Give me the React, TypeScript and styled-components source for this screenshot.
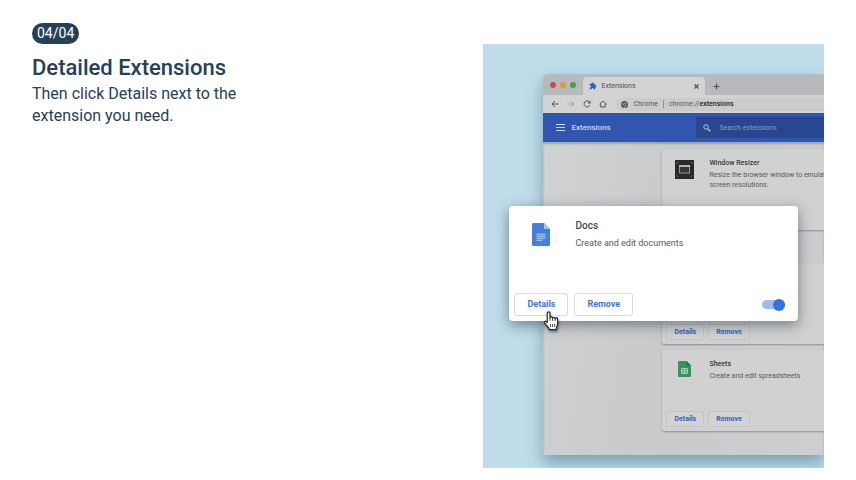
import React from "react";
import styled, { createGlobalStyle } from "styled-components";

const GlobalStyle = createGlobalStyle`
  *, *::before, *::after { box-sizing: border-box; }
  body {
    margin: 0;
    background: #fff;
    color: #284056;
    font-family: Roboto, "Liberation Sans", sans-serif;
  }
  h1, h2, h3, p { margin: 0; }
  button, input { font-family: inherit; }
  svg { display: block; }
`;

const Page = styled.main`
  display: grid;
  grid-template-columns: minmax(0, 1fr) minmax(0, 43%);
  padding: 23px 32px 12px;
`;

const Intro = styled.section`
  max-width: 224px;
`;

const StepBadge = styled.span`
  display: inline-block;
  padding: 0 5px;
  border-radius: 11px;
  background: #264057;
  color: #fff;
  font-size: 14px;
  line-height: 21px;
`;

const Title = styled.h1`
  margin-top: 9px;
  font-size: 22px;
  font-weight: 500;
  line-height: 30px;
  white-space: nowrap;
`;

const Lead = styled.p`
  font-size: 16px;
  line-height: 22px;
`;

const Illustration = styled.section`
  position: relative;
  overflow: hidden;
  margin-top: 21px;
  padding: 30px 0 13px 60px;
  background: #bfddea;
`;

const BrowserWindow = styled.div`
  border-radius: 5px 0 0 3px;
  background: #cbccce;
  box-shadow: 0 8px 16px rgba(60, 100, 125, 0.5);
`;

const TabStrip = styled.div`
  display: flex;
  align-items: flex-end;
  height: 21px;
  border-radius: 5px 0 0 0;
  background: #b7b9bd;
`;

const WindowDots = styled.div`
  display: flex;
  align-items: center;
  gap: 4px;
  width: 40px;
  height: 21px;
  padding-left: 7px;
`;

const Dot = styled.span<{ $color: string }>`
  width: 6px;
  height: 6px;
  border-radius: 50%;
  background: ${(p) => p.$color};
`;

const Tab = styled.div`
  display: flex;
  align-items: center;
  gap: 4px;
  width: 122px;
  height: 18px;
  padding: 0 5px 0 6px;
  border-radius: 4px 4px 0 0;
  background: #d3d3d4;
  color: #4b4d50;
  font-size: 7px;
`;

const TabLabel = styled.span`
  flex: 1;
`;

const IconButton = styled.button`
  display: flex;
  align-items: center;
  justify-content: center;
  width: 8px;
  height: 8px;
  padding: 0;
  border: 0;
  background: none;
  color: #505256;
`;

const NewTab = styled(IconButton)`
  margin: 0 0 5px 7px;
`;

const MenuButton = styled(IconButton)`
  width: 9px;
  color: #cfd8ea;
`;

const Toolbar = styled.div`
  display: flex;
  align-items: center;
  gap: 8px;
  height: 18px;
  padding-left: 8px;
  background: #d3d3d4;
`;

const AddressBar = styled.div`
  display: flex;
  flex: 1;
  align-items: center;
  gap: 5px;
  height: 13px;
  padding-left: 6px;
  border-radius: 7px 0 0 7px;
  background: #cacbcc;
  color: #56585b;
  font-size: 7px;
  white-space: nowrap;
`;

const AddressDivider = styled.span`
  width: 1px;
  height: 8px;
  background: #8e9093;
`;

const AddressPath = styled.span`
  color: #242629;
  font-weight: 500;
`;

const AppHeader = styled.header`
  display: flex;
  align-items: center;
  height: 29px;
  padding-left: 13px;
  background: #3156b0;
  color: #cfd8ea;
`;

const HeaderTitle = styled.h2`
  width: 125px;
  margin-left: 6px;
  font-size: 8px;
  font-weight: 500;
`;

const SearchBox = styled.label`
  display: flex;
  flex: 1;
  align-items: center;
  gap: 8px;
  min-width: 0;
  height: 21px;
  padding-left: 7px;
  background: #29478f;
`;

const SearchInput = styled.input`
  flex: 1;
  min-width: 0;
  padding: 0;
  border: 0;
  background: none;
  color: #cfd8ea;
  font-size: 7px;
  &::placeholder { color: #8b9dc6; opacity: 1; }
`;

const Content = styled.div`
  padding: 7px 0 24px 119px;
  background: linear-gradient(100deg, #cfd1d3, #c9cacc 45%, #cdced0);
  box-shadow: inset 0 2px 2px rgba(60, 65, 75, 0.3);
`;

const CardList = styled.div`
  display: grid;
  gap: 6px;
  margin-top: 33px;
`;

const Card = styled.article`
  display: flex;
  flex-direction: column;
  overflow: hidden;
  height: 81px;
  padding: 7px 0 4px 4px;
  border-radius: 2px 0 0 2px;
  background: #d1d1d1;
  box-shadow: 0 1px 2px rgba(50, 52, 56, 0.4);
`;

const CardBody = styled.div`
  display: grid;
  grid-template-columns: 37px 1fr;
  column-gap: 6px;
`;

const CardIcon = styled.div`
  display: flex;
  justify-content: center;
  padding-top: 4px;
`;

const CardTitle = styled.h3`
  color: #36383b;
  font-size: 7px;
  font-weight: 500;
  line-height: 14px;
`;

const CardText = styled.p`
  color: #56585b;
  font-size: 7px;
  line-height: 10px;
  white-space: nowrap;
`;

const CardActions = styled.div`
  display: flex;
  gap: 4px;
  margin-top: auto;
`;

const CardButton = styled.button`
  height: 16px;
  padding: 0 7px;
  border: 1px solid #c2c4c7;
  border-radius: 2px;
  background: #d3d3d4;
  color: #3462b4;
  font-size: 7px;
  font-weight: 700;
  line-height: 14px;
`;

const Spotlight = styled.article`
  position: absolute;
  top: 162px;
  right: 26px;
  left: 26px;
  display: grid;
  gap: 41px;
  padding: 11px 13px 5px 5px;
  border-radius: 4px;
  background: #fff;
  box-shadow: 0 4px 14px rgba(30, 40, 50, 0.5);
`;

const SpotlightBody = styled.div`
  display: grid;
  grid-template-columns: 53px 1fr;
  column-gap: 8px;
`;

const SpotlightIcon = styled.div`
  display: flex;
  justify-content: center;
  padding-top: 6px;
`;

const SpotlightTitle = styled.h3`
  color: #45474a;
  font-size: 10px;
  font-weight: 500;
  line-height: 18px;
`;

const SpotlightText = styled.p`
  color: #56585b;
  font-size: 9px;
  line-height: 17px;
`;

const SpotlightActions = styled.div`
  display: flex;
  align-items: center;
  gap: 6px;
`;

const SpotlightButton = styled.button`
  height: 23px;
  padding: 0 12px;
  border: 1px solid #dadce4;
  border-radius: 3px;
  background: #fff;
  color: #3c78e0;
  font-size: 9px;
  font-weight: 700;
  line-height: 21px;
`;

const Toggle = styled.input`
  appearance: none;
  display: flex;
  align-items: center;
  justify-content: flex-end;
  width: 23px;
  height: 9px;
  margin: 0 0 0 auto;
  border-radius: 5px;
  background: #9dbcf4;
  &::before {
    content: "";
    width: 12px;
    height: 12px;
    flex-shrink: 0;
    border-radius: 50%;
    background: #3273df;
  }
`;

const Pointer = styled.div`
  position: absolute;
  top: 105px;
  left: 34px;
  filter: drop-shadow(1px 2px 1px rgba(0, 0, 0, 0.35));
`;

const strokeProps = {
  fill: "none",
  stroke: "currentColor",
  strokeWidth: 2.4,
} as const;

const Puzzle = () => (
  <svg width="8" height="8" viewBox="0 0 24 24" fill="#2f5fb8" aria-hidden="true">
    <path d="M20.5 11H19V7a2 2 0 0 0-2-2h-4V3.500a2.500 2.500 0 0 0-5 0V5H4a2 2 0 0 0-2 2v3.800h1.500a2.700 2.700 0 0 1 0 5.400H2V20a2 2 0 0 0 2 2h3.800v-1.500a2.700 2.700 0 0 1 5.400 0V22H17a2 2 0 0 0 2-2v-4h1.500a2.500 2.500 0 0 0 0-5z" />
  </svg>
);

const Close = () => (
  <svg width="5" height="5" viewBox="0 0 10 10" aria-hidden="true">
    <path {...strokeProps} d="M1 1l8 8M9 1L1 9" />
  </svg>
);

const Plus = () => (
  <svg width="7" height="7" viewBox="0 0 14 14" aria-hidden="true">
    <path {...strokeProps} d="M7 1v12M1 7h12" />
  </svg>
);

const ArrowLeft = () => (
  <svg width="8" height="8" viewBox="0 0 16 16" aria-hidden="true">
    <path {...strokeProps} strokeWidth={2} d="M15 8H2M8 2L2 8l6 6" />
  </svg>
);

const ArrowRight = () => (
  <svg width="8" height="8" viewBox="0 0 16 16" aria-hidden="true">
    <path {...strokeProps} stroke="#9b9da0" strokeWidth={2} d="M1 8h13M8 2l6 6-6 6" />
  </svg>
);

const Reload = () => (
  <svg width="8" height="8" viewBox="0 0 16 16" aria-hidden="true">
    <path {...strokeProps} strokeWidth={2} d="M13.500 10.500a6 6 0 1 1-1-6.700L14 5.500" />
    <path fill="currentColor" d="M15 1v6H9z" />
  </svg>
);

const Home = () => (
  <svg width="8" height="8" viewBox="0 0 16 16" aria-hidden="true">
    <path {...strokeProps} strokeWidth={2} d="M1 8.500L8 2l7 6.500M3.500 7v7h9V7" />
  </svg>
);

const ChromeMark = () => (
  <svg width="7" height="7" viewBox="0 0 14 14" aria-hidden="true">
    <circle cx="7" cy="7" r="7" fill="#505256" />
    <path fill="none" stroke="#cacbcc" strokeWidth="1" d="M7 4h6.200M4.400 8.500L1.300 3.200M9.600 8.500L6.600 13.800" />
    <circle cx="7" cy="7" r="2.500" fill="#505256" stroke="#cacbcc" />
  </svg>
);

const Menu = () => (
  <svg width="9" height="7" viewBox="0 0 9 7" fill="currentColor" aria-hidden="true">
    <path d="M0 0h9v1H0zM0 3h9v1H0zM0 6h9v1H0z" />
  </svg>
);

const Search = () => (
  <svg width="8" height="8" viewBox="0 0 16 16" color="#b6c2dd" aria-hidden="true">
    <circle {...strokeProps} strokeWidth={2} cx="6" cy="6" r="4.500" />
    <path {...strokeProps} d="M9.500 9.500L15 15" />
  </svg>
);

const ResizerIcon = () => (
  <svg width="19" height="19" viewBox="0 0 19 19" aria-hidden="true">
    <rect width="19" height="19" fill="#292a2c" />
    <path fill="none" stroke="#5e6062" strokeWidth="0.800" d="M2 4V2.500h1.500M15.500 2.500H17V4M2 15v1.500h1.500M15.500 16.500H17V15" />
    <rect x="4.500" y="6" width="10" height="7" fill="#353638" stroke="#959697" />
    <path stroke="#d2d2d2" strokeWidth="1.500" d="M4 6h11" />
  </svg>
);

const SheetsIcon = () => (
  <svg width="13" height="16" viewBox="0 0 13 16" aria-hidden="true">
    <path fill="#35945a" d="M1 0h7.500L13 4.500V15a1 1 0 0 1-1 1H1a1 1 0 0 1-1-1V1a1 1 0 0 1 1-1z" />
    <path fill="#23744a" d="M8.500 0L13 4.500H8.500z" />
    <path fill="none" stroke="#b9d3c1" strokeWidth="0.900" d="M3.500 7.500h6v5h-6zM3.500 9.200h6M3.500 10.900h6M6.500 7.500v5" />
  </svg>
);

const DocsIcon = () => (
  <svg width="18" height="23" viewBox="0 0 18 23" aria-hidden="true">
    <path fill="#467ddf" d="M1.500 0H12l6 6v15.500a1.500 1.500 0 0 1-1.500 1.500h-15A1.500 1.500 0 0 1 0 21.500v-20A1.500 1.500 0 0 1 1.500 0z" />
    <path fill="#a5c3f7" d="M12 0l6 6h-6z" />
    <path fill="none" stroke="#c3d6f8" d="M4.500 11.200h9M4.500 13.200h9M4.500 15.200h9M4.500 17.200h6" />
  </svg>
);

const HandIcon = () => (
  <svg width="16" height="20" viewBox="0 0 16 20" aria-hidden="true">
    <path
      fill="#fff"
      stroke="#242424"
      strokeWidth="1.200"
      strokeLinejoin="round"
      d="M4.200 11.500V2.300a1.400 1.400 0 0 1 2.800 0V7a1.300 1.300 0 0 1 2.600.3 1.300 1.300 0 0 1 2.500.5 1.200 1.200 0 0 1 2.500.7v4.300c0 2-1.300 3-1.300 4.400v1.500H6.100v-1.400L1.500 12c-.8-1.300.8-2.500 1.800-1.400z"
    />
    <path stroke="#242424" strokeWidth="0.800" d="M7 7v3M9.600 7.500v2.500M12.100 8v2M7.500 13v3M9.600 13v3M11.700 13v3" />
  </svg>
);

interface ExtensionCardProps {
  name: string;
  lines: string[];
  icon: React.ReactNode;
}

const ExtensionCard = ({ name, lines, icon }: ExtensionCardProps) => (
  <Card>
    <CardBody>
      <CardIcon>{icon}</CardIcon>
      <div>
        <CardTitle>{name}</CardTitle>
        {lines.map((line) => (
          <CardText key={line}>{line}</CardText>
        ))}
      </div>
    </CardBody>
    <CardActions>
      <CardButton>Details</CardButton>
      <CardButton>Remove</CardButton>
    </CardActions>
  </Card>
);

export default function App() {
  return (
    <>
      <GlobalStyle />
      <Page>
        <Intro>
          <StepBadge>04/04</StepBadge>
          <Title>Detailed Extensions</Title>
          <Lead>Then click Details next to the extension you need.</Lead>
        </Intro>
        <Illustration>
          <BrowserWindow>
            <TabStrip>
              <WindowDots>
                <Dot $color="#cc4c49" />
                <Dot $color="#d4a03a" />
                <Dot $color="#43a047" />
              </WindowDots>
              <Tab>
                <Puzzle />
                <TabLabel>Extensions</TabLabel>
                <IconButton aria-label="Close tab"><Close /></IconButton>
              </Tab>
              <NewTab aria-label="New tab"><Plus /></NewTab>
            </TabStrip>
            <Toolbar>
              <IconButton aria-label="Back"><ArrowLeft /></IconButton>
              <IconButton aria-label="Forward"><ArrowRight /></IconButton>
              <IconButton aria-label="Reload"><Reload /></IconButton>
              <IconButton aria-label="Home"><Home /></IconButton>
              <AddressBar>
                <ChromeMark />
                <span>Chrome</span>
                <AddressDivider />
                <span>chrome://<AddressPath>extensions</AddressPath></span>
              </AddressBar>
            </Toolbar>
            <AppHeader>
              <MenuButton aria-label="Main menu"><Menu /></MenuButton>
              <HeaderTitle>Extensions</HeaderTitle>
              <SearchBox>
                <Search />
                <SearchInput type="search" aria-label="Search extensions" placeholder="Search extensions" />
              </SearchBox>
            </AppHeader>
            <Content>
              <ExtensionCard
                name="Window Resizer"
                lines={["Resize the browser window to emulate the", "screen resolutions."]}
                icon={<ResizerIcon />}
              />
              <CardList>
                <Card>
                  <CardActions>
                    <CardButton>Details</CardButton>
                    <CardButton>Remove</CardButton>
                  </CardActions>
                </Card>
                <ExtensionCard name="Sheets" lines={["Create and edit spreadsheets"]} icon={<SheetsIcon />} />
              </CardList>
            </Content>
          </BrowserWindow>
          <Spotlight>
            <SpotlightBody>
              <SpotlightIcon><DocsIcon /></SpotlightIcon>
              <div>
                <SpotlightTitle>Docs</SpotlightTitle>
                <SpotlightText>Create and edit documents</SpotlightText>
              </div>
            </SpotlightBody>
            <SpotlightActions>
              <SpotlightButton>Details</SpotlightButton>
              <SpotlightButton>Remove</SpotlightButton>
              <Toggle type="checkbox" role="switch" aria-label="Enable Docs" defaultChecked />
            </SpotlightActions>
            <Pointer><HandIcon /></Pointer>
          </Spotlight>
        </Illustration>
      </Page>
    </>
  );
}
